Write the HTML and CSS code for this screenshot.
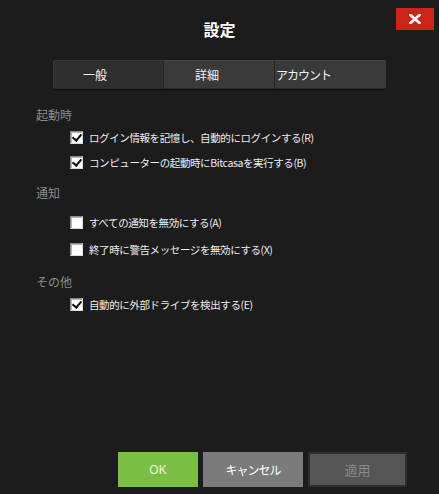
FILE: index.html
```html
<!DOCTYPE html>
<html lang="ja">
<head>
  <meta charset="UTF-8">
  <title>設定</title>
  <link rel="stylesheet" href="styles.css">
</head>
<body>
  <div class="dialog">
    <!-- header -->
    <div class="header">
      <div class="title">設定</div>
      <div class="close-btn">
        <svg width="12" height="10" viewBox="0 0 12 10">
          <path d="M1.5 1 L10.5 9 M10.5 1 L1.5 9" stroke="#fff" stroke-width="2.6" stroke-linecap="square"/>
        </svg>
      </div>
    </div>

    <!-- tabs -->
    <div class="tabs">
      <div class="tab tab-active tab-general">一般</div>
      <div class="tab tab-detail">詳細</div>
      <div class="tab tab-account">アカウント</div>
    </div>

    <!-- startup -->
    <div class="section section-startup">
      <div class="section-label">起動時</div>
      <div class="rows">
        <label class="row"><span class="check checked"></span>ログイン情報を記憶し、自動的にログインする(R)</label>
        <label class="row"><span class="check checked"></span>コンピューターの起動時にBitcasaを実行する(B)</label>
      </div>
    </div>

    <!-- notifications -->
    <div class="section section-notify">
      <div class="section-label">通知</div>
      <div class="rows">
        <label class="row"><span class="check"></span>すべての通知を無効にする(A)</label>
        <label class="row"><span class="check"></span>終了時に警告メッセージを無効にする(X)</label>
      </div>
    </div>

    <!-- other -->
    <div class="section section-other">
      <div class="section-label">その他</div>
      <div class="rows">
        <label class="row"><span class="check checked"></span>自動的に外部ドライブを検出する(E)</label>
      </div>
    </div>

    <div class="footer">
      <div class="btn btn-ok">OK</div>
      <div class="btn btn-cancel">キャンセル</div>
      <div class="btn btn-apply">適用</div>
    </div>
  </div>
</body>
</html>
```

FILE: styles.css
```css
* {
  box-sizing: border-box;
}

body {
  margin: 0;
  padding: 0;
  width: 439px;
  height: 494px;
  background: #1c1c1c;
  color: #ececec;
  font-family: "Noto Sans CJK JP", "Noto Sans", sans-serif;
  font-size: 11px;
  overflow: hidden;
}

.dialog {
  display: flex;
  flex-direction: column;
  height: 494px;
}

.header {
  position: relative;
  height: 60px;
  display: flex;
  justify-content: center;
  padding-top: 18px;
}

.title {
  font-size: 16px;
  font-weight: bold;
  line-height: 22px;
  color: #fff;
}

.close-btn {
  position: absolute;
  top: 8px;
  right: 5px;
  width: 38px;
  height: 22px;
  background: #cc2517;
  display: flex;
  align-items: center;
  justify-content: center;
}

.tabs {
  display: flex;
  margin-left: 53px;
  width: 333px;
  height: 29px;
  border-radius: 3px;
  background: #262626;
  box-shadow: 0 1px 1px rgba(0, 0, 0, 0.6);
  overflow: hidden;
}

.tab {
  height: 29px;
  line-height: 28px;
  font-size: 12px;
  color: #f2f2f2;
  background: #3a3a3a;
  border-top: 1px solid #494949;
  border-bottom: 1px solid #2a2a2a;
}

.tab-general {
  width: 110px;
  padding-left: 29px;
  background: #2f2f2f;
  border-top-color: #383838;
  border-left: 1px solid #3a3a3a;
}

.tab-detail {
  width: 111px;
  padding-left: 31px;
  border-left: 1px solid #262626;
}

.tab-account {
  width: 112px;
  padding-left: 1px;
  border-left: 1px solid #262626;
  letter-spacing: -1px;
}

.section-label {
  height: 20px;
  line-height: 20px;
  padding-left: 36px;
  font-size: 12px;
  color: #8b8b8b;
}

.section-startup {
  margin-top: 16px;
}

.section-notify {
  margin-top: 8px;
}

.section-notify .rows {
  margin-top: 7px;
  display: flex;
  flex-direction: column;
  gap: 2px;
}

.section-other {
  margin-top: 10px;
}

.row {
  display: flex;
  align-items: center;
  height: 25px;
  padding-left: 70px;
  font-size: 10.5px;
  letter-spacing: -0.4px;
  color: #ededed;
}

.check {
  width: 13px;
  height: 13px;
  margin-right: 6px;
  flex: none;
  background: #fff;
  border: 1px solid #8a8a8a;
  border-right-color: #dcdcdc;
  border-bottom-color: #dcdcdc;
  box-shadow: inset 1px 1px 0 #b5b5b5;
  position: relative;
}

.check.checked::after {
  content: "";
  position: absolute;
  left: 3px;
  top: 0px;
  width: 4px;
  height: 7px;
  border-right: 2px solid #111;
  border-bottom: 2px solid #111;
  transform: rotate(40deg);
}

.footer {
  margin-top: auto;
  margin-bottom: 7px;
  display: flex;
  gap: 5px;
  padding-left: 118px;
}

.btn {
  height: 35px;
  display: flex;
  align-items: center;
  justify-content: center;
  font-size: 12px;
}

.btn-ok {
  width: 80px;
  background: #7abf43;
  color: #eaf5e0;
  font-family: "Liberation Sans", sans-serif;
}

.btn-cancel {
  width: 100px;
  background: #7b7b7b;
  color: #fff;
  letter-spacing: -1px;
}

.btn-apply {
  width: 99px;
  background: #555;
  border: 2px solid #2e2e2e;
  color: #8a8a8a;
  font-size: 13px;
}
```
